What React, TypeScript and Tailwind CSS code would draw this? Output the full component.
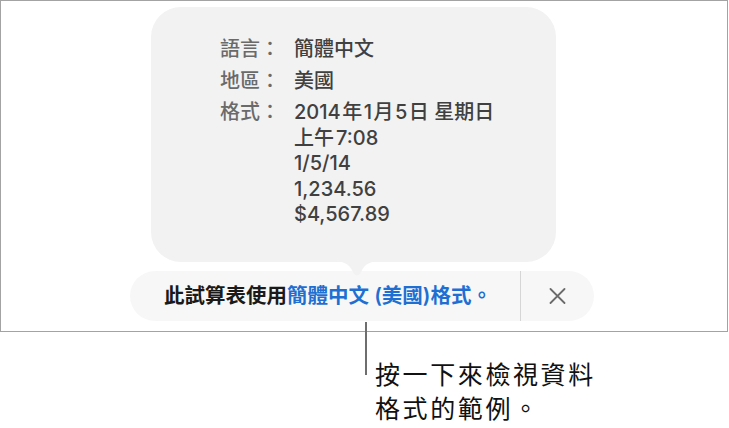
import React from 'react';

const rows: { label: string; lines: React.ReactNode[] }[] = [
  { label: '語言：', lines: ['簡體中文'] },
  { label: '地區：', lines: ['美國'] },
  {
    label: '格式：',
    lines: [
      <>
        2014<span className="mx-[1.5px]">年</span>1<span className="mx-[1.5px]">月</span>5
        <span className="ml-[1.5px]">日</span> 星期日
      </>,
      <>
        上午<span className="ml-[2px]">7:08</span>
      </>,
      '1/5/14',
      '1,234.56',
      '$4,567.89',
    ],
  },
];

export default function App() {
  return (
    <div
      className="w-[729px] h-[428px] bg-white"
      style={{ fontFamily: 'Inter, "Noto Sans CJK TC", "Noto Sans", sans-serif' }}
    >
      {/* framed app area */}
      <div className="w-[728px] h-[332px] border-[1.5px] border-[#a3a3a3] flex flex-col pt-[6px]">
        {/* format popover */}
        <div className="relative ml-[150px] w-[405px] h-[255px] rounded-[30px] bg-[#f2f2f2] pt-[30px] pl-[69px]">
          <div className="grid grid-cols-[60px_1fr] gap-x-[14px] gap-y-[6px] text-[20px] leading-[25.5px] font-medium">
            {rows.map(row => (
              <React.Fragment key={row.label}>
                <div className="text-[#6a6a6a]">{row.label}</div>
                <div className="flex flex-col text-[#404040]">
                  {row.lines.map((l, i) => (
                    <div key={i} className="whitespace-nowrap">
                      {l}
                    </div>
                  ))}
                </div>
              </React.Fragment>
            ))}
          </div>
          {/* arrow */}
          <svg
            className="absolute left-[179px] top-[254px]"
            width="54"
            height="18"
            viewBox="0 0 54 18"
          >
            <path
              d="M0 0 C13 0 19 2 23 11 Q27 18 31 11 C35 2 41 0 54 0 Z"
              fill="#f2f2f2"
            />
          </svg>
        </div>

        {/* info bar */}
        <div className="ml-[129px] mt-[9px] w-[464px] h-[50px] rounded-full bg-[#f7f7f7] flex items-center">
          <div className="flex-1 pl-[34px] text-[20.5px] font-semibold whitespace-nowrap text-[#1a1a1a]">
            此試算表使用<span className="text-[#1f6fd2]">簡體中文 (美國)格式。</span>
          </div>
          <div className="w-[1.5px] self-stretch bg-[#d6d6d6]" />
          <div className="w-[73px] flex items-center justify-center">
            <svg width="17" height="16" viewBox="0 0 17 16">
              <path d="M1.5 1 L15.5 15 M15.5 1 L1.5 15" stroke="#6b6b6b" strokeWidth="1.8" strokeLinecap="round" />
            </svg>
          </div>
        </div>
      </div>

      {/* callout */}
      <div className="-mt-[10px] ml-[365px] flex">
        <div className="w-[2px] h-[53px] bg-[#6e6e6e]" />
        <div className="ml-[8px] mt-[36px] text-[25px] leading-[34px] tracking-[2.6px] text-[#111111] whitespace-nowrap">
          <div>按一下來檢視資料</div>
          <div>格式的範例。</div>
        </div>
      </div>
    </div>
  );
}
